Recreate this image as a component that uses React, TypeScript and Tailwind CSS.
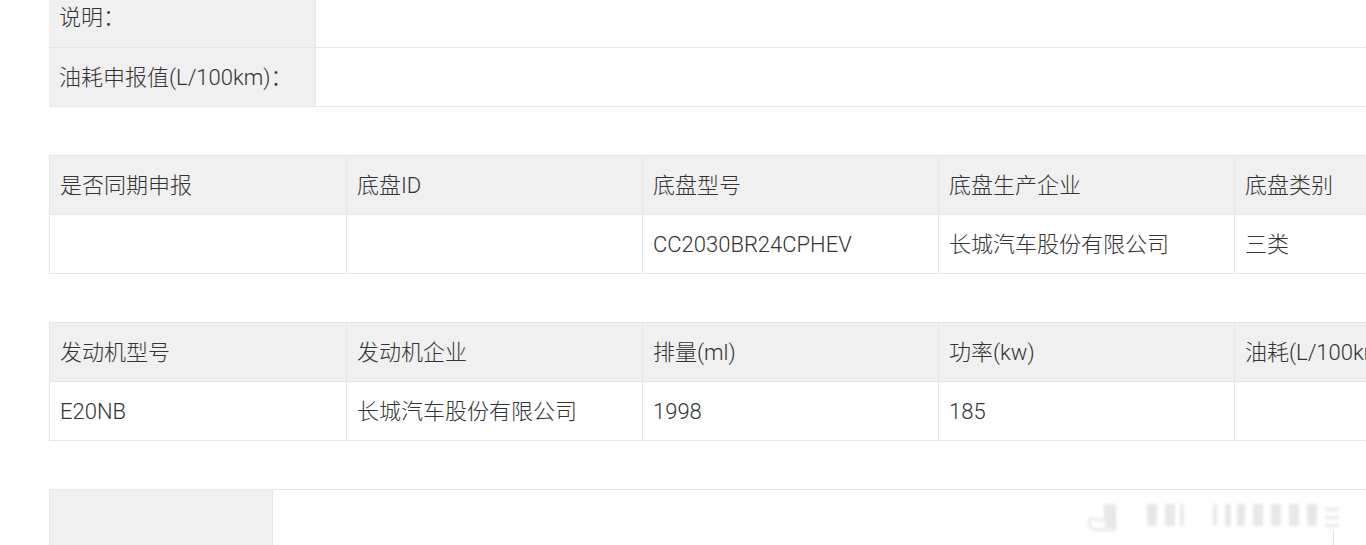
const font = { fontFamily: 'Roboto, "Noto Sans CJK SC", "Noto Sans", sans-serif' };

function InfoRow({ label, first }: { label: string; first?: boolean }) {
  return (
    <div className={`flex h-[59px] ${first ? "" : "border-t border-[#e6e6e6]"}`}>
      <div className="w-[267px] shrink-0 bg-[#f0f0f0] border-r border-[#e6e6e6] px-[10px] flex items-center">
        {label}
      </div>
      <div className="flex-1 bg-white" />
    </div>
  );
}

function GridTable({ head, body }: { head: string[]; body: string[] }) {
  return (
    <div className="w-[1482px] border border-[#e6e6e6]">
      <div className="grid grid-cols-5 h-[59px] bg-[#f0f0f0] border-b border-[#e6e6e6]">
        {head.map((h, i) => (
          <div key={i} className={`px-[10px] flex items-center whitespace-nowrap ${i > 0 ? "border-l border-[#e6e6e6]" : ""}`}>
            {h}
          </div>
        ))}
      </div>
      <div className="grid grid-cols-5 h-[58px] bg-white">
        {body.map((b, i) => (
          <div key={i} className={`px-[10px] flex items-center whitespace-nowrap ${i > 0 ? "border-l border-[#e6e6e6]" : ""}`}>
            {b}
          </div>
        ))}
      </div>
    </div>
  );
}

export default function App() {
  return (
    <div className="w-[1366px] h-[545px] overflow-hidden bg-white text-[#333] text-[22px] font-light relative" style={font}>
      <div className="pl-[49px]">
        <div className="-mt-[12px] w-[1400px] border-b border-[#e6e6e6]">
          <InfoRow label="说明：" first />
          <InfoRow label="油耗申报值(L/100km)：" />
        </div>
        <div className="mt-[48px]">
          <GridTable
            head={["是否同期申报", "底盘ID", "底盘型号", "底盘生产企业", "底盘类别"]}
            body={["", "", "CC2030BR24CPHEV", "长城汽车股份有限公司", "三类"]}
          />
        </div>
        <div className="mt-[48px]">
          <GridTable
            head={["发动机型号", "发动机企业", "排量(ml)", "功率(kw)", "油耗(L/100km)"]}
            body={["E20NB", "长城汽车股份有限公司", "1998", "185", ""]}
          />
        </div>
        <div className="mt-[48px] w-[1400px] border-t border-l border-[#e6e6e6] flex h-[80px]">
          <div className="w-[223px] bg-[#f0f0f0] border-r border-[#e6e6e6]" />
          <div className="flex-1" />
        </div>
      </div>
      <svg className="absolute left-[1085px] top-[490px] blur-[1.5px] opacity-60" width="280" height="55" viewBox="0 0 280 55">
        <g fill="#d8d8d8">
          <path d="M4 30 a8 8 0 0 0 8 10 h18 v-24 h-10 v14 h-8 a8 8 0 0 0 -8 0z" fill="none" stroke="#d0d0d0" strokeWidth="2" />
          <rect x="20" y="14" width="10" height="24" />
          <rect x="62" y="14" width="10" height="22" />
          <rect x="80" y="14" width="10" height="22" />
          <rect x="95" y="14" width="4" height="22" />
          <rect x="128" y="14" width="4" height="22" />
          <rect x="140" y="14" width="6" height="22" />
          <rect x="152" y="14" width="8" height="22" />
          <rect x="168" y="14" width="10" height="22" />
          <rect x="186" y="14" width="10" height="22" />
          <rect x="204" y="14" width="10" height="22" />
          <rect x="222" y="14" width="10" height="22" />
          <rect x="240" y="18" width="14" height="3" />
          <rect x="240" y="26" width="14" height="3" />
          <rect x="240" y="34" width="14" height="3" />
        </g>
      </svg>
      <div className="absolute left-[1333px] top-[530px] w-px h-[15px] bg-[#e0e0e0]" />
    </div>
  );
}
